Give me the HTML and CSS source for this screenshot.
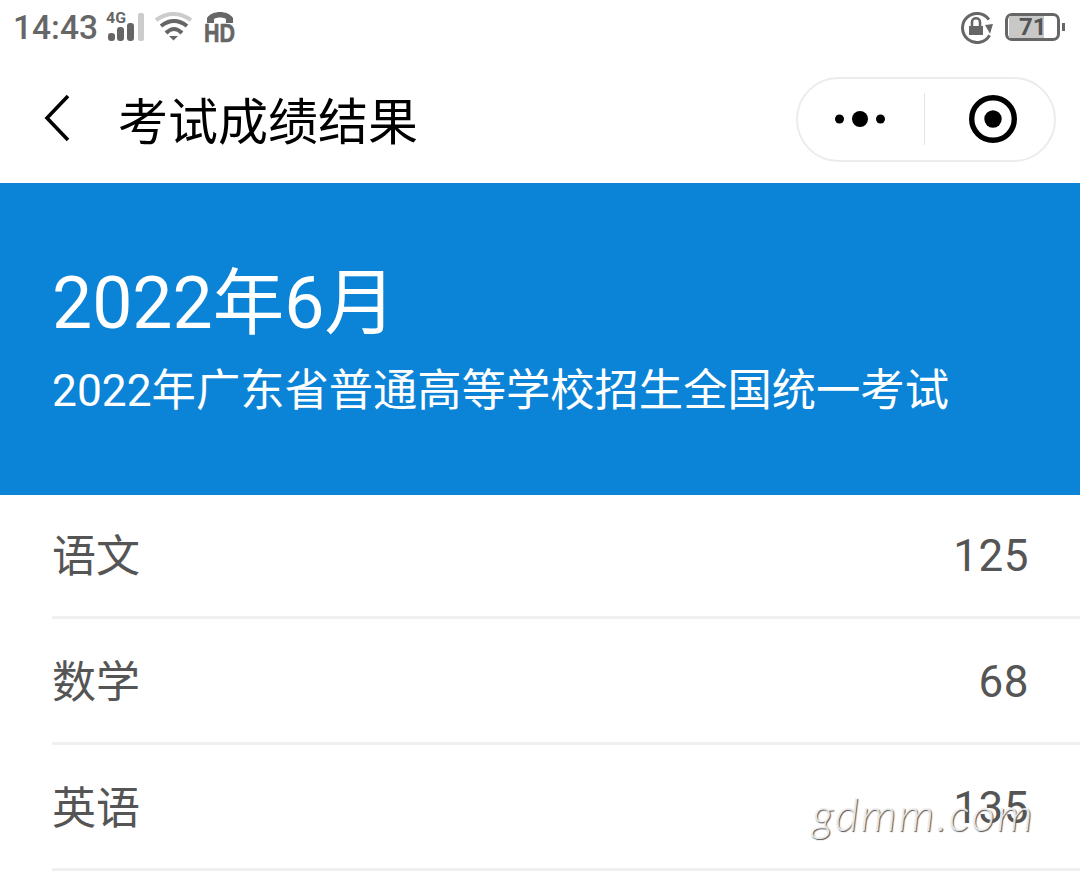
FILE: index.html
```html
<html>
<head>
<meta charset="utf-8">
<title>考试成绩结果</title>
<link rel="stylesheet" href="styles.css">
</head>
<body>
<div class="page">

    <div class="statusbar">
        <div class="status-left">
            <span class="time">14:43</span>
            <svg class="ico-signal" width="40" height="32" viewBox="0 0 40 32">
                <text x="0" y="11" class="ico-4g" textLength="20" lengthAdjust="spacingAndGlyphs">4G</text>
                <rect x="2" y="21" width="7" height="8" rx="3" fill="#666"/>
                <rect x="11" y="15" width="7" height="14" rx="3" fill="#666"/>
                <rect x="21" y="11" width="7" height="18" rx="3" fill="#666"/>
                <rect x="32" y="1" width="6" height="28" rx="2" fill="#ccc"/>
            </svg>
            <svg class="ico-wifi" width="40" height="32" viewBox="0 0 40 32">
                <path d="M2 8 Q19.5 -4 37 8" fill="none" stroke="#ccc" stroke-width="4"/>
                <path d="M7 14 Q20 4 33 14" fill="none" stroke="#666" stroke-width="4"/>
                <path d="M12 21 Q20 13 28 21" fill="none" stroke="#666" stroke-width="4"/>
                <path d="M15 24 L24 24 L19.5 28.5 Z" fill="#666"/>
            </svg>
            <svg class="ico-hd" width="32" height="32" viewBox="0 0 32 32">
                <path d="M3 11 L3 6 C8 -2 24 -2 29 6 L29 11 L22 11 L22 7 C19 5 13 5 10 7 L10 11 Z" fill="#666"/>
                <text x="0" y="30" class="ico-hdtext" textLength="31" lengthAdjust="spacingAndGlyphs">HD</text>
            </svg>
        </div>
        <div class="status-right">
            <svg class="ico-lock" width="34" height="32" viewBox="0 0 34 32">
                <path d="M29.6 23.2 A14.5 14.5 0 1 1 28.9 7.7" fill="none" stroke="#666" stroke-width="3"/>
                <path d="M25 13 L33 12 L30 21.7 Z" fill="#666"/>
                <rect x="9" y="14" width="14" height="9" fill="#666"/>
                <path d="M12 14 L12 10 C12 5 20 5 20 10 L20 14" fill="none" stroke="#666" stroke-width="2.6"/>
            </svg>
            <div class="battery">
                <div class="battery-body">
                    <div class="battery-fill"></div>
                    <span class="battery-num">71</span>
                </div>
                <div class="battery-tip"></div>
            </div>
        </div>
    </div>

    <div class="navbar">
        <svg class="ico-back" width="30" height="48" viewBox="0 0 30 48">
            <path d="M25 2 L4 24 L25 46" fill="none" stroke="#000" stroke-width="3.6"/>
        </svg>
        <div class="nav-title">考试成绩结果</div>
        <div class="capsule">
            <div class="capsule-part part-more">
                <svg width="50" height="18" viewBox="0 0 50 18">
                    <circle cx="4.5" cy="9" r="4.5" fill="#000"/>
                    <circle cx="25" cy="9" r="8" fill="#000"/>
                    <circle cx="45.5" cy="9" r="4.5" fill="#000"/>
                </svg>
            </div>
            <div class="capsule-line"></div>
            <div class="capsule-part part-close">
                <svg width="48" height="48" viewBox="0 0 48 48">
                    <circle cx="24" cy="24" r="21.3" fill="none" stroke="#000" stroke-width="5.4"/>
                    <circle cx="24" cy="24" r="8.7" fill="#000"/>
                </svg>
            </div>
        </div>
    </div>

    <div class="banner">
        <div class="banner-date">2022年6月</div>
        <div class="banner-sub">2022年广东省普通高等学校招生全国统一考试</div>
    </div>

    <div class="list">
        <div class="row"><span>语文</span><span class="score">125</span></div>
        <div class="row"><span>数学</span><span class="score">68</span></div>
        <div class="row"><span>英语</span><span class="score">135</span></div>
    </div>

    <div class="watermark">gdmm.com</div>
</div>
</body>
</html>
```

FILE: styles.css
```css
html, body {
    margin: 0;
    padding: 0;
    background: #fff;
}

.page {
    position: relative;
    width: 1080px;
    height: 880px;
    overflow: hidden;
    font-family: Roboto, "Noto Sans CJK SC", sans-serif;
}

.statusbar {
    height: 56px;
    box-sizing: border-box;
    padding: 12px 15px 0 13px;
    display: flex;
    justify-content: space-between;
    align-items: flex-start;
}

.status-left, .status-right {
    display: flex;
    align-items: flex-start;
}

.time {
    width: 93px;
    font-size: 33.5px;
    line-height: 32px;
    font-weight: 500;
    color: #666;
}

.ico-signal {
    margin-right: 8px;
    overflow: visible;
}

.ico-4g {
    font-family: Roboto, sans-serif;
    font-size: 14px;
    font-weight: 700;
    fill: #666;
}

.ico-wifi {
    margin-right: 10px;
}

.ico-hd {
    overflow: visible;
}

.ico-hdtext {
    font-family: "Liberation Sans", sans-serif;
    font-size: 25px;
    font-weight: 700;
    fill: #666;
    stroke: #666;
    stroke-width: 0.6px;
}

.ico-lock {
    margin-right: 11px;
}

.battery {
    display: flex;
    align-items: center;
    margin-top: 1px;
}

.battery-body {
    position: relative;
    width: 49px;
    height: 22px;
    border: 3px solid #666;
    border-radius: 7px;
}

.battery-fill {
    position: absolute;
    left: 1px;
    top: 0;
    bottom: 0;
    width: 35px;
    background: #c8c8c8;
}

.battery-num {
    position: absolute;
    left: 11px;
    top: -1px;
    font-size: 24px;
    line-height: 24px;
    font-weight: 700;
    color: #555;
}

.battery-tip {
    width: 3px;
    height: 8px;
    margin-left: 2px;
    background: #666;
}

.navbar {
    height: 127px;
    padding: 0 24px 0 43px;
    display: flex;
    align-items: center;
}

.ico-back {
    margin-right: 45px;
    margin-bottom: 3px;
}

.nav-title {
    font-size: 50px;
    color: #000;
    flex: 1;
    padding-bottom: 4px;
}

.capsule {
    width: 260px;
    height: 85px;
    box-sizing: border-box;
    border: 2px solid #ececec;
    border-radius: 43px;
    display: flex;
    align-items: center;
    margin-bottom: 1px;
}

.capsule-part {
    flex: 1;
    display: flex;
    justify-content: center;
}

.part-more {
    padding-right: 3px;
}

.part-close {
    padding-left: 6px;
}

.capsule-line {
    width: 1px;
    height: 52px;
    background: #e4e4e4;
}

.banner {
    height: 312px;
    box-sizing: border-box;
    padding: 74px 0 0 52px;
    background: #0b84d8;
    color: #fff;
}

.banner-date {
    font-size: 71.5px;
    line-height: 94px;
}

.banner-sub {
    margin-top: 8px;
    font-size: 44.3px;
    line-height: 64px;
}

.list {
    margin-top: -2px;
    padding-left: 52px;
}

.row {
    height: 119px;
    padding: 0 51px 4px 0;
    border-bottom: 3px solid #f0f0f0;
    display: flex;
    justify-content: space-between;
    align-items: center;
    font-size: 44px;
    color: #555;
}

.score {
    font-size: 44px;
    letter-spacing: 0.5px;
    margin-top: 6px;
}

.watermark {
    position: absolute;
    left: 812px;
    top: 786px;
    font-family: Lato, sans-serif;
    font-size: 46px;
    font-style: italic;
    font-weight: 300;
    letter-spacing: 2px;
    color: rgba(240, 240, 240, 0.92);
    text-shadow: 1px 1px 1px #555;
}
```
